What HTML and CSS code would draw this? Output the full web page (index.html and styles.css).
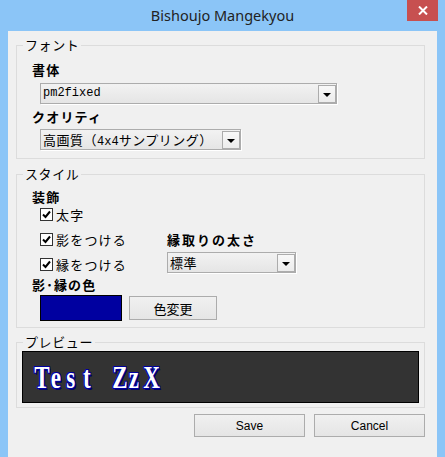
FILE: index.html
```html
<!DOCTYPE html>
<html lang="ja">
<head>
  <meta charset="UTF-8">
  <title>Bishoujo Mangekyou</title>
  <link rel="stylesheet" href="styles.css">
</head>
<body>

<div class="window">
  <div class="titlebar">
    <span class="title">Bishoujo Mangekyou</span>
    <span class="close-btn">
      <svg width="10" height="9" viewBox="0 0 10 9"><path d="M1 0.5 L9 8.5 M9 0.5 L1 8.5" stroke="#fff" stroke-width="2"/></svg>
    </span>
  </div>

  <div class="client">

    <div class="group group-font">
      <span class="group-title">フォント</span>
      <div class="label">書体</div>
      <div class="combo combo-face">
        <span class="combo-text mono">pm2fixed</span>
        <span class="combo-btn"><i class="arrow"></i></span>
      </div>
      <div class="label label-gap">クオリティ</div>
      <div class="combo combo-quality">
        <span class="combo-text">高画質（<span class="mono">4x4</span>サンプリング）</span>
        <span class="combo-btn"><i class="arrow"></i></span>
      </div>
    </div>

    <div class="group group-style">
      <span class="group-title">スタイル</span>
      <div class="label">装飾</div>
      <div class="deco-grid">
        <label class="check">
          <span class="box"><svg width="11" height="11" viewBox="0 0 11 11"><path d="M2 5.5 L4.5 8 L9 2.5" fill="none" stroke="#000" stroke-width="2"/></svg></span>太字
        </label>
        <label class="check">
          <span class="box"><svg width="11" height="11" viewBox="0 0 11 11"><path d="M2 5.5 L4.5 8 L9 2.5" fill="none" stroke="#000" stroke-width="2"/></svg></span>影をつける
        </label>
        <label class="check">
          <span class="box"><svg width="11" height="11" viewBox="0 0 11 11"><path d="M2 5.5 L4.5 8 L9 2.5" fill="none" stroke="#000" stroke-width="2"/></svg></span>縁をつける
        </label>
        <div class="edge-col">
          <div class="label label-edge">縁取りの太さ</div>
          <div class="combo combo-edge">
            <span class="combo-text">標準</span>
            <span class="combo-btn"><i class="arrow"></i></span>
          </div>
        </div>
      </div>
      <div class="label label-color">影･縁の色</div>
      <div class="color-row">
        <span class="swatch"></span>
        <button class="btn btn-color">色変更</button>
      </div>
    </div>

    <div class="group group-preview">
      <span class="group-title">プレビュー</span>
      <div class="preview">
        <span class="ch">T</span><span class="ch">e</span><span class="ch">s</span><span class="ch">t</span><span class="ch"></span><span class="ch">Z</span><span class="ch">z</span><span class="ch">X</span>
      </div>
    </div>

    <div class="actions">
      <button class="btn btn-dialog">Save</button>
      <button class="btn btn-dialog">Cancel</button>
    </div>

  </div>
</div>

</body>
</html>
```

FILE: styles.css
```css
html, body {
  margin: 0;
  padding: 0;
}

body {
  font-family: "Noto Sans CJK JP", sans-serif;
  font-size: 13px;
  color: #000;
}

.window {
  width: 445px;
  height: 457px;
  background: #8bc5f7;
  overflow: hidden;
}

.titlebar {
  position: relative;
  height: 31px;
  display: flex;
  justify-content: center;
  align-items: center;
}

.title {
  font-family: "Noto Sans", sans-serif;
  font-size: 14.5px;
  color: #222;
  margin-top: -2px;
}

.close-btn {
  position: absolute;
  top: 0;
  right: 7px;
  width: 31px;
  height: 21px;
  background: #c75050;
  display: flex;
  justify-content: center;
  align-items: center;
}

.client {
  margin-left: 8px;
  width: 429px;
  height: 426px;
  box-sizing: border-box;
  padding: 14px 0 0 8px;
  background: #f0f0f0;
}

/* group boxes */
.group {
  position: relative;
  box-sizing: border-box;
  width: 409px;
  border: 1px solid #dcdcdc;
  padding-left: 15px;
}

.group-title {
  position: absolute;
  top: -8px;
  left: 6px;
  padding: 0 2px;
  line-height: 14px;
  background: #f0f0f0;
  letter-spacing: 0.6px;
}

.group-font {
  height: 114px;
  padding-top: 17px;
}

.group-style {
  height: 154px;
  margin-top: 15px;
  padding-top: 15px;
}

.group-preview {
  height: 66px;
  margin-top: 14px;
  padding: 8px 5px;
}

.label {
  font-weight: bold;
  line-height: 14px;
  letter-spacing: 1.2px;
}

.label-gap {
  margin-top: 6px;
}

/* combo boxes */
.combo {
  box-sizing: border-box;
  height: 21px;
  margin-left: 8px;
  display: flex;
  align-items: flex-start;
  border: 1px solid #acacac;
  background: linear-gradient(#f2f2f2, #e5e5e5);
  box-shadow: 1px 1px 0 #fff;
}

.combo-face {
  width: 297px;
  margin-top: 6px;
}

.combo-quality {
  width: 201px;
  margin-top: 5px;
}

.combo-text {
  flex: 1;
  padding-left: 2px;
  line-height: 19px;
  white-space: nowrap;
  letter-spacing: 0.5px;
}

.mono {
  font-family: "Liberation Mono", "Noto Sans CJK JP", monospace;
  font-size: 12px;
  letter-spacing: 0;
}

.combo-btn {
  box-sizing: border-box;
  width: 18px;
  height: 18px;
  margin-top: 1px;
  border: 1px solid #acacac;
  background: linear-gradient(#f8f8f8, #ececec);
  display: flex;
  justify-content: center;
  align-items: center;
}

.arrow {
  width: 0;
  height: 0;
  border-left: 4px solid transparent;
  border-right: 4px solid transparent;
  border-top: 4px solid #000;
  margin-top: 1px;
}

/* decoration area */
.deco-grid {
  display: grid;
  grid-template-columns: 127px 1fr;
  grid-template-rows: 20px 20px 20px;
  row-gap: 5px;
  margin-left: 8px;
}

.check {
  grid-column: 1;
  display: flex;
  align-items: center;
  letter-spacing: 1.2px;
}

.box {
  box-sizing: border-box;
  width: 13px;
  height: 13px;
  margin-right: 3px;
  border: 1px solid #333;
  background: #fff;
  display: flex;
  justify-content: center;
  align-items: center;
}

.edge-col {
  grid-column: 2;
  grid-row: 2 / 4;
}

.label-edge {
  line-height: 22px;
  letter-spacing: 2px;
}

.combo-edge {
  width: 129px;
  margin-left: 0;
  margin-top: 1px;
}

.label-color {
  margin-top: 4px;
}

.color-row {
  display: flex;
  align-items: center;
  margin-top: 3px;
  margin-left: 8px;
}

.swatch {
  box-sizing: border-box;
  width: 82px;
  height: 26px;
  background: #0000a0;
  border: 1px solid #000;
}

/* buttons */
.btn {
  box-sizing: border-box;
  border: 1px solid #acacac;
  background: linear-gradient(#f0f0f0, #e5e5e5);
  color: #000;
  padding: 0;
  font-family: "Noto Sans CJK JP", sans-serif;
  font-size: 13px;
}

.btn-color {
  width: 88px;
  height: 24px;
  margin-left: 7px;
}

.btn-dialog {
  width: 111px;
  height: 23px;
  font-family: "Liberation Sans", sans-serif;
  font-size: 12px;
}

.actions {
  width: 409px;
  margin-top: 6px;
  display: flex;
  justify-content: flex-end;
  gap: 9px;
}

/* preview */
.preview {
  box-sizing: border-box;
  height: 52px;
  background: #333;
  border: 1px solid #000;
  padding-left: 9px;
  display: flex;
  align-items: center;
}

.ch {
  display: inline-block;
  width: 15.6px;
  text-align: center;
  font-family: "Liberation Serif", serif;
  font-weight: bold;
  font-size: 32px;
  line-height: 32px;
  color: #fff;
  transform: scaleX(0.72);
  text-shadow:
    -1px -1px 0 #0000a0, 0 -1px 0 #0000a0, 1px -1px 0 #0000a0,
    -1px 0 0 #0000a0, 1px 0 0 #0000a0,
    -1px 1px 0 #0000a0, 0 1px 0 #0000a0, 1px 1px 0 #0000a0,
    2px 2px 0 #00006a;
}
```
